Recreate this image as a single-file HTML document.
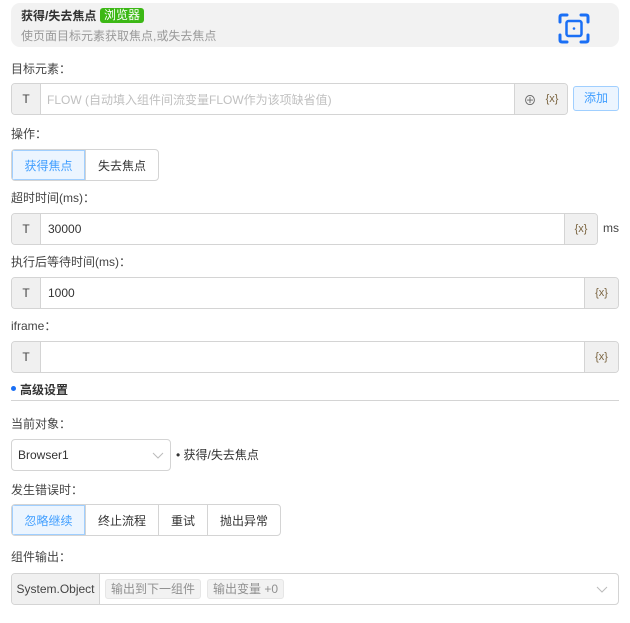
<!DOCTYPE html>
<html><head><meta charset="utf-8"><style>
*{box-sizing:border-box;margin:0;padding:0}
body{width:630px;height:623px;background:#fff;font-family:"Liberation Sans","Noto Sans CJK SC",sans-serif;font-size:12px;color:#333;position:relative;overflow:hidden}
.a{position:absolute}
.lbl{position:absolute;left:11px;font-size:12px;color:#444}
.box{position:absolute;border:1px solid #d4d4d4;border-radius:4px;background:#fff;overflow:hidden}
.t{position:absolute;left:0;top:0;bottom:0;width:29px;background:#f0f0f0;border-right:1px solid #d4d4d4;text-align:center;color:#444;display:flex;align-items:center;justify-content:center}
.suf{position:absolute;top:0;bottom:0;right:0;background:#f0f0f0;border-left:1px solid #d4d4d4;display:flex;align-items:center;justify-content:center;color:#7a6440;font-size:11px}
.val{position:absolute;left:36px;top:0;bottom:0;display:flex;align-items:center;color:#333}
.seg{position:absolute;display:flex;border:1px solid #d4d4d4;border-radius:4px;overflow:hidden;background:#fff}
.seg div{display:flex;align-items:center;justify-content:center;border-left:1px solid #d4d4d4;color:#333}
.seg div:first-child{border-left:none;background:#ecf5ff;color:#409eff;box-shadow:inset 0 0 0 1px #a0cfff}
.tag{position:absolute;top:5px;height:20px;background:#f2f2f2;border:1px solid #e6e6e6;border-radius:3px;color:#909090;font-size:12px;line-height:18px;padding:0 5px}
</style></head><body>
<div class="a" style="left:11px;top:3px;width:608px;height:44px;background:#f2f2f2;border-radius:9px"></div>
<div class="a" style="left:21px;top:8px;font-weight:bold;font-size:12px;color:#333;line-height:16px">获得/失去焦点</div>
<div class="a" style="left:100px;top:8px;width:44px;height:15px;background:#3cb815;color:#fff;border-radius:3px;font-size:12px;line-height:15px;text-align:center">浏览器</div>
<div class="a" style="left:21px;top:28px;color:#999;font-size:12px;line-height:16px">使页面目标元素获取焦点,或失去焦点</div>
<svg class="a" style="left:558px;top:13px" width="32" height="31" viewBox="0 0 32 31" fill="none" stroke="#1a6ff5" stroke-width="3" stroke-linecap="round"><path d="M2 9V4Q2 2 4 2H9M23 2H28Q30 2 30 4V9M30 22V27Q30 29 28 29H23M9 29H4Q2 29 2 27V22"/><rect x="8.5" y="8" width="15" height="15" rx="2" stroke-width="2.5"/><circle cx="16" cy="15.5" r="1.3" fill="#1a6ff5" stroke="none"/></svg>

<div class="lbl" style="top:60px">目标元素：</div>
<div class="box" style="left:11px;top:83px;width:557px;height:32px"><div class="t">T</div><div class="val" style="left:35px;color:#c0c0c0">FLOW (自动填入组件间流变量FLOW作为该项缺省值)</div><div class="suf" style="width:53px;justify-content:space-around;padding:0 4px"><span style="color:#666;font-size:13px">⊕</span><span>{x}</span></div></div>
<div class="a" style="left:573px;top:86px;width:46px;height:25px;background:#ecf5ff;border:1px solid #a0cfff;border-radius:3px;color:#409eff;text-align:center;line-height:23px">添加</div>

<div class="lbl" style="top:125px">操作：</div>
<div class="seg" style="left:11px;top:149px;height:32px"><div style="width:73px">获得焦点</div><div style="width:73px">失去焦点</div></div>

<div class="lbl" style="top:189px">超时时间(ms)：</div>
<div class="box" style="left:11px;top:213px;width:587px;height:32px"><div class="t">T</div><div class="val">30000</div><div class="suf" style="width:33px">{x}</div></div>
<div class="a" style="left:603px;top:221px;color:#444">ms</div>

<div class="lbl" style="top:253px">执行后等待时间(ms)：</div>
<div class="box" style="left:11px;top:277px;width:608px;height:32px"><div class="t">T</div><div class="val">1000</div><div class="suf" style="width:34px">{x}</div></div>

<div class="lbl" style="top:317px">iframe：</div>
<div class="box" style="left:11px;top:341px;width:608px;height:32px"><div class="t">T</div><div class="suf" style="width:34px">{x}</div></div>

<div class="a" style="left:11px;top:386px;width:5px;height:5px;border-radius:50%;background:#1a6ff5"></div>
<div class="a" style="left:20px;top:381px;font-weight:bold;color:#333">高级设置</div>
<div class="a" style="left:11px;top:400px;width:608px;height:1px;background:#d4d4d4"></div>

<div class="lbl" style="top:415px">当前对象：</div>
<div class="box" style="left:11px;top:439px;width:160px;height:32px"><div class="val" style="left:6px">Browser1</div>
<svg class="a" style="left:140px;top:12px" width="12" height="8"><path d="M1 1L6 6L11 1" stroke="#bbb" fill="none"/></svg></div>
<div class="a" style="left:176px;top:446px;color:#333">• 获得/失去焦点</div>

<div class="lbl" style="top:481px">发生错误时：</div>
<div class="seg" style="left:11px;top:504px;height:32px"><div style="width:73px">忽略继续</div><div style="width:73px">终止流程</div><div style="width:49px">重试</div><div style="width:73px">抛出异常</div></div>

<div class="lbl" style="top:548px">组件输出：</div>
<div class="box" style="left:11px;top:573px;width:608px;height:32px"><div class="t" style="width:88px;font-size:12px">System.Object</div>
<div class="tag" style="left:93px">输出到下一组件</div><div class="tag" style="left:195px">输出变量 +0</div>
<svg class="a" style="left:584px;top:12px" width="12" height="8"><path d="M1 1L6 6L11 1" stroke="#bbb" fill="none"/></svg></div>
</body></html>
